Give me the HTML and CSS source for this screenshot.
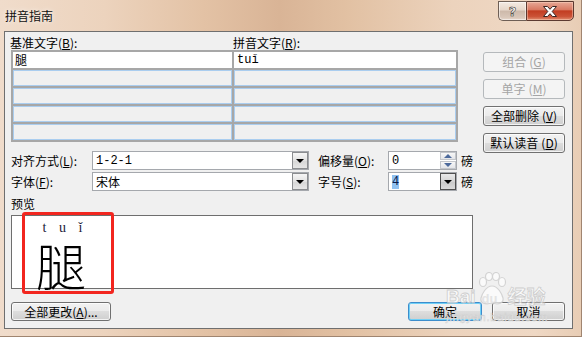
FILE: index.html
```html
<!DOCTYPE html>
<html lang="zh-CN">
<head>
<meta charset="utf-8">
<title>拼音指南</title>
<link rel="stylesheet" href="styles.css">
</head>
<body>
<div class="window">
  <div class="titlebar">
    <div class="title">拼音指南</div>
    <div class="caption-btns">
      <div class="cap-btn help"><span>?</span></div>
      <div class="cap-btn close">
        <svg width="20" height="13" viewBox="0 0 20 13"><path d="M3.5 1.5 H7.5 L10 4.3 L12.5 1.5 H16.5 L12.2 6.5 L16.5 11.5 H12.5 L10 8.7 L7.5 11.5 H3.5 L7.8 6.5 Z" fill="#fff" stroke="#3a2622" stroke-width="1" stroke-linejoin="round"/></svg>
      </div>
    </div>
  </div>
  <div class="client">
    <div class="main">
      <div class="left">
        <div class="col-labels">
          <span>基准文字(<u>B</u>):</span>
          <span>拼音文字(<u>R</u>):</span>
        </div>
        <div class="grid-table">
          <div class="cell first">腿</div>
          <div class="cell first latin">tuǐ</div>
          <div class="cell"></div><div class="cell"></div>
          <div class="cell"></div><div class="cell"></div>
          <div class="cell"></div><div class="cell"></div>
          <div class="cell"></div><div class="cell"></div>
        </div>
        <div class="options">
          <span class="lbl">对齐方式(<u>L</u>):</span>
          <div class="combo"><span class="val latin">1-2-1</span><span class="drop"><i></i></span></div>
          <span class="lbl lbl2">偏移量(<u>O</u>):</span>
          <div class="combo"><span class="val latin">0</span><span class="spinbtns"><b class="up"></b><b class="down"></b></span></div>
          <span class="unit">磅</span>

          <span class="lbl">字体(<u>F</u>):</span>
          <div class="combo"><span class="val">宋体</span><span class="drop"><i></i></span></div>
          <span class="lbl lbl2">字号(<u>S</u>):</span>
          <div class="combo"><span class="val latin"><span class="sel">4</span></span><span class="drop hot"><i></i></span></div>
          <span class="unit">磅</span>
        </div>
        <div class="preview-label">预览</div>
        <div class="preview">
          <div class="ruby">
            <div class="py"><span>t</span><span>u</span><span>ǐ</span></div>
            <div class="han">腿</div>
          </div>
          <div class="mark"></div>
        </div>
      </div>
      <div class="right">
        <div class="btn disabled">组合<span class="k">(<u>G</u>)</span></div>
        <div class="btn disabled">单字<span class="k">(<u>M</u>)</span></div>
        <div class="btn">全部删除<span class="k">(<u>V</u>)</span></div>
        <div class="btn">默认读音<span class="k">(<u>D</u>)</span></div>
      </div>
    </div>
    <div class="bottom">
      <div class="btn wide">全部更改(<u>A</u>)...</div>
      <div class="btn-pair">
        <div class="btn ok">确定</div>
        <div class="btn cancel">取消</div>
      </div>
    </div>
  </div>
  <div class="watermark">
    <div class="wm-top">
      <span class="wm-bai">Bai</span>
      <span class="wm-paw">
        <svg width="30" height="34" viewBox="0 0 30 34">
          <g fill="rgba(255,255,255,0.8)" stroke="#cfcfcf" stroke-width="1.2">
            <ellipse cx="6" cy="10" rx="3.5" ry="4.5"/>
            <ellipse cx="12" cy="4.5" rx="3.5" ry="4"/>
            <ellipse cx="19" cy="4.5" rx="3.5" ry="4"/>
            <ellipse cx="25" cy="10" rx="3.5" ry="4.5"/>
            <path d="M15 14 C9 14 5 22 4 26 C3 31 8 33 15 31 C22 33 27 31 26 26 C25 22 21 14 15 14 Z"/>
          </g>
        </svg>
        <span class="wm-du">du</span>
      </span>
      <span class="wm-jy">经验</span>
    </div>
    <div class="wm-url">jingyan.baidu.com</div>
  </div>
</div>
</body>
</html>
```

FILE: styles.css
```css
html, body {
  margin: 0;
  padding: 0;
}
body {
  width: 582px;
  height: 337px;
  overflow: hidden;
  font-family: "Noto Sans CJK SC", "Noto Sans", sans-serif;
  font-size: 12px;
  color: #000;
}
u { text-decoration: underline; text-underline-offset: 1px; }

.window {
  position: relative;
  width: 582px;
  height: 337px;
  box-sizing: border-box;
  display: flex;
  flex-direction: column;
  background: linear-gradient(90deg, #f0dccb 0%, #ecd3bd 18%, #e3c2a5 35%, #d9b496 48%, #e2c1a3 60%, #ecd3bd 78%, #efd8c4 92%, #e8cdb5 100%);
  border-right: 1px solid #a08570;
  border-bottom: 1px solid #a08570;
}

/* title bar */
.titlebar {
  height: 31px;
  flex: 0 0 31px;
  display: flex;
  justify-content: space-between;
  align-items: flex-start;
}
.title {
  padding: 9px 0 0 5px;
  line-height: 14px;
  font-size: 12px;
  color: #111;
  text-shadow: 0 0 5px rgba(255, 255, 255, 0.9);
}
.caption-btns {
  display: flex;
  margin: 1px 7px 0 0;
}
.cap-btn {
  height: 19px;
  box-sizing: border-box;
  display: flex;
  align-items: center;
  justify-content: center;
}
.cap-btn.help {
  width: 28px;
  height: 20px;
  border: 1px solid #6e5f56;
  border-right: none;
  border-radius: 0 0 0 5px;
  background: linear-gradient(#f4ebe3 0%, #e6d6c9 45%, #cdb9aa 50%, #d9c7b9 85%, #e7d8cc 100%);
  box-shadow: inset 0 0 0 1px rgba(255, 255, 255, 0.5);
}
.cap-btn.help span {
  font-family: "DejaVu Sans", sans-serif;
  font-weight: bold;
  font-size: 13px;
  line-height: 13px;
  color: #fff;
  -webkit-text-stroke: 0.6px #3e3430;
}
.cap-btn.close {
  width: 48px;
  height: 20px;
  border: 1px solid #5c3a31;
  border-radius: 0 0 5px 0;
  background: linear-gradient(#e7a896 0%, #d97a63 42%, #c23d22 50%, #cb5236 80%, #e08d70 100%);
  box-shadow: inset 0 0 0 1px rgba(255, 220, 200, 0.45);
}

/* client area */
.client {
  margin: 0 8px 0 4px;
  height: 298px;
  box-sizing: border-box;
  border: 1px solid #6f6f6f;
  background: #f0f0f0;
  padding: 4px 7px 0 6px;
  display: flex;
  flex-direction: column;
}
.main {
  display: flex;
  justify-content: space-between;
}
.left {
  width: 462px;
  display: flex;
  flex-direction: column;
}
.col-labels {
  display: grid;
  grid-template-columns: 222px 1fr;
  height: 14px;
  line-height: 14px;
}
.col-labels span:first-child { margin-left: -1px; }

.grid-table {
  width: 447px;
  box-sizing: border-box;
  display: grid;
  grid-template-columns: 219px 1fr;
  grid-auto-rows: 16px;
  gap: 2px;
  padding: 2px;
  background: #a7a7a7;
}
.cell {
  background: #f0f0f0;
  box-shadow: inset 0 0 0 1px #aacdef;
  line-height: 16px;
  padding-left: 2px;
}
.cell.first {
  background: #fff;
  box-shadow: none;
}
.cell.latin {
  font-family: "Liberation Mono", monospace;
  padding-left: 3px;
  font-size: 12px;
}

/* options */
.options {
  margin-top: 9px;
  display: grid;
  grid-template-columns: 81px 217px 79px 69px auto;
  grid-auto-rows: 19px;
  row-gap: 2px;
  align-items: center;
}
.lbl { line-height: 14px; }
.lbl2 { padding-left: 9px; }
.unit { padding-left: 4px; line-height: 14px; }
.combo {
  height: 19px;
  box-sizing: border-box;
  border: 1px solid #a5a8ad;
  background: #fff;
  display: flex;
  align-items: center;
  justify-content: space-between;
}
.val {
  padding-left: 3px;
  line-height: 14px;
}
.val.latin {
  font-family: "Liberation Mono", monospace;
  font-size: 12px;
}
.sel {
  background: #8fc1f1;
  color: #07194a;
}
.drop {
  align-self: stretch;
  width: 16px;
  box-sizing: border-box;
  border: 1px solid #8b8d90;
  background: linear-gradient(#f6f6f6, #e3e3e3 50%, #d6d6d6 51%, #e6e6e6);
  display: flex;
  align-items: center;
  justify-content: center;
}
.drop.hot {
  border-color: #4f4f4f;
  background: linear-gradient(#e9e9e9, #d4d4d4 50%, #c9c9c9 51%, #dadada);
}
.drop i {
  width: 0;
  height: 0;
  border-left: 4px solid transparent;
  border-right: 4px solid transparent;
  border-top: 4px solid #000;
  margin-top: 1px;
}
.spinbtns {
  align-self: stretch;
  width: 16px;
  display: flex;
  flex-direction: column;
  gap: 1px;
  padding: 0;
}
.spinbtns b {
  flex: 1;
  box-sizing: border-box;
  border: 1px solid #c3c6cb;
  background: linear-gradient(#f7f7f7, #e3e5e9);
  display: flex;
  align-items: center;
  justify-content: center;
}
.spinbtns b::after {
  content: "";
  width: 0;
  height: 0;
  border-left: 4px solid transparent;
  border-right: 4px solid transparent;
}
.spinbtns .up::after { border-bottom: 4px solid #4d6a9c; }
.spinbtns .down::after { border-top: 4px solid #4d6a9c; }

/* preview */
.preview-label {
  margin-top: 6px;
  line-height: 14px;
}
.preview {
  position: relative;
  margin-top: 4px;
  height: 74px;
  box-sizing: border-box;
  border: 1px solid #6e6e6e;
  background: #fff;
  padding: 5px 0 0 24px;
}
.ruby {
  width: 50px;
  display: flex;
  flex-direction: column;
  align-items: center;
}
.py {
  display: flex;
  margin-left: 3px;
  font-family: "Liberation Serif", serif;
  font-size: 14px;
  line-height: 14px;
  color: #1a2038;
}
.py span {
  width: 18px;
  text-align: center;
}
.han {
  margin-top: 4px;
  font-size: 50px;
  line-height: 50px;
  font-weight: 300;
  color: #000;
}
.mark {
  position: absolute;
  left: 10px;
  top: -4px;
  width: 92px;
  height: 82px;
  box-sizing: border-box;
  border: 3px solid #f2261f;
  border-radius: 3px;
}

/* buttons */
.right {
  width: 82px;
  padding-top: 16px;
  display: flex;
  flex-direction: column;
  gap: 7px;
}
.btn {
  height: 20px;
  box-sizing: border-box;
  border: 1px solid #707070;
  border-radius: 3px;
  background: linear-gradient(#f2f2f2 0%, #ebebeb 48%, #dddddd 50%, #cfcfcf 100%);
  box-shadow: inset 0 0 0 1px rgba(255, 255, 255, 0.75);
  display: flex;
  align-items: center;
  justify-content: center;
  line-height: 14px;
  white-space: nowrap;
}
.btn .k { margin-left: 3px; }
.btn.disabled {
  border-color: #b5b9bc;
  background: #f4f4f4;
  box-shadow: none;
  color: #a5a5a5;
}
.bottom {
  margin-top: 13px;
  display: flex;
  justify-content: space-between;
}
.bottom .btn { height: 19px; }
.btn.wide { width: 100px; }
.btn-pair {
  display: flex;
  gap: 10px;
}
.btn.ok {
  width: 74px;
  border-color: #3c8dcc;
  box-shadow: inset 0 0 0 1px #6fd0f7;
}
.btn.cancel { width: 73px; }

/* watermark */
.watermark {
  position: absolute;
  left: 446px;
  top: 270px;
  width: 110px;
  pointer-events: none;
  opacity: 0.85;
}
.wm-top {
  display: flex;
  align-items: flex-end;
  height: 36px;
}
.wm-bai, .wm-du {
  font-family: "Liberation Sans", sans-serif;
  font-weight: bold;
  font-size: 19px;
  line-height: 19px;
  color: rgba(255, 255, 255, 0.85);
  -webkit-text-stroke: 0.8px #c8c8c8;
}
.wm-paw {
  position: relative;
  width: 30px;
  height: 34px;
  margin: 0 1px;
}
.wm-paw svg { position: absolute; left: 0; top: 0; }
.wm-du {
  position: absolute;
  left: 5px;
  bottom: 1px;
  font-size: 13px;
  line-height: 13px;
  color: #e2e2e2;
  -webkit-text-stroke: 0;
}
.wm-jy {
  font-size: 19px;
  line-height: 20px;
  font-weight: bold;
  color: rgba(255, 255, 255, 0.85);
  -webkit-text-stroke: 0.8px #c8c8c8;
}
.wm-url {
  margin-top: 5px;
  font-family: "Liberation Sans", sans-serif;
  font-size: 11px;
  line-height: 12px;
  letter-spacing: 0.8px;
  color: rgba(255, 255, 255, 0.9);
  -webkit-text-stroke: 0.5px #cccccc;
}
```
